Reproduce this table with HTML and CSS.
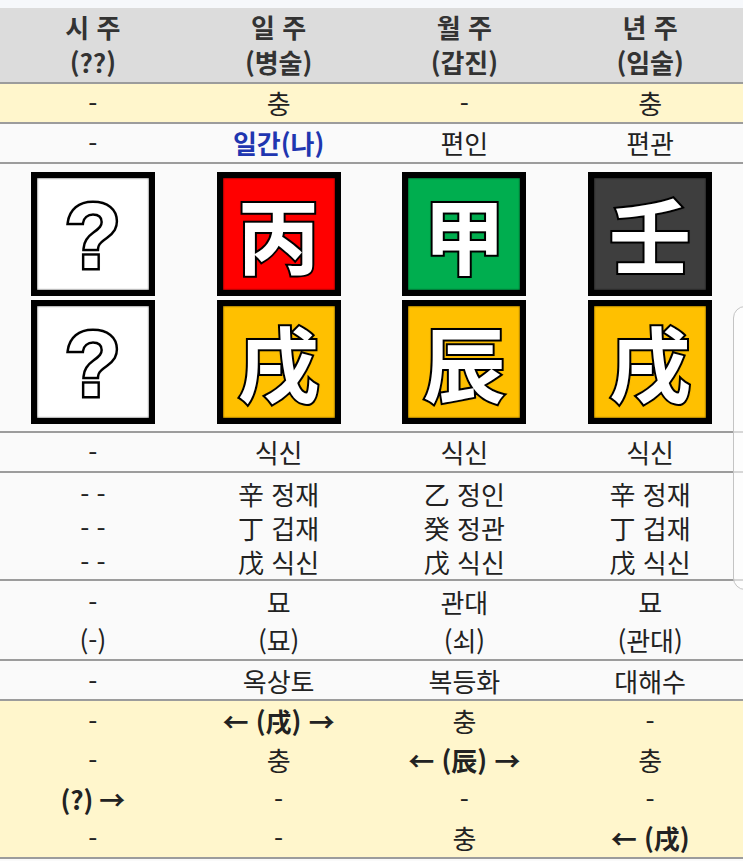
FILE: index.html
```html
<!DOCTYPE html>
<html lang="ko">
<head>
<meta charset="utf-8">
<title>사주 명식</title>
<link rel="stylesheet" href="styles.css">
</head>
<body>
<div class="page">
  <div class="topstrip"></div>
  <div class="table">
    <div class="row head">
      <div class="cell"><div>시 주</div><div>(??)</div></div>
      <div class="cell"><div>일 주</div><div>(병술)</div></div>
      <div class="cell"><div>월 주</div><div>(갑진)</div></div>
      <div class="cell"><div>년 주</div><div>(임술)</div></div>
    </div>
    <div class="row yellow single">
      <div class="cell">-</div>
      <div class="cell">충</div>
      <div class="cell">-</div>
      <div class="cell">충</div>
    </div>
    <div class="row single">
      <div class="cell">-</div>
      <div class="cell me">일간(나)</div>
      <div class="cell">편인</div>
      <div class="cell">편관</div>
    </div>
    <div class="row pillars">
      <div class="cell stack">
        <div class="box white"><span class="q">?</span></div>
        <div class="box white"><span class="q">?</span></div>
      </div>
      <div class="cell stack">
        <div class="box red"><span class="hz">丙</span></div>
        <div class="box earth"><span class="hz">戌</span></div>
      </div>
      <div class="cell stack">
        <div class="box green"><span class="hz">甲</span></div>
        <div class="box earth"><span class="hz">辰</span></div>
      </div>
      <div class="cell stack">
        <div class="box dark"><span class="hz">壬</span></div>
        <div class="box earth"><span class="hz">戌</span></div>
      </div>
    </div>
    <div class="row single">
      <div class="cell">-</div>
      <div class="cell">식신</div>
      <div class="cell">식신</div>
      <div class="cell">식신</div>
    </div>
    <div class="row stems">
      <div class="cell"><div>- -</div><div>- -</div><div>- -</div></div>
      <div class="cell"><div>辛 정재</div><div>丁 겁재</div><div>戊 식신</div></div>
      <div class="cell"><div>乙 정인</div><div>癸 정관</div><div>戊 식신</div></div>
      <div class="cell"><div>辛 정재</div><div>丁 겁재</div><div>戊 식신</div></div>
    </div>
    <div class="row stages">
      <div class="cell"><div>-</div><div>(-)</div></div>
      <div class="cell"><div>묘</div><div>(묘)</div></div>
      <div class="cell"><div>관대</div><div>(쇠)</div></div>
      <div class="cell"><div>묘</div><div>(관대)</div></div>
    </div>
    <div class="row single nabeum">
      <div class="cell">-</div>
      <div class="cell">옥상토</div>
      <div class="cell">복등화</div>
      <div class="cell">대해수</div>
    </div>
    <div class="row yellow rel">
      <div class="cell"><div>-</div><div>-</div><div class="b">(?) →</div><div>-</div></div>
      <div class="cell"><div class="b">← (戌) →</div><div>충</div><div>-</div><div>-</div></div>
      <div class="cell"><div>충</div><div class="b">← (辰) →</div><div>-</div><div>충</div></div>
      <div class="cell"><div>-</div><div>충</div><div>-</div><div class="b">← (戌)</div></div>
    </div>
  </div>
  <div class="scrollhandle"></div>
</div>
</body>
</html>
```
FILE: styles.css
```css
html, body {
  margin: 0;
  padding: 0;
  background: #fafafa;
}
body {
  font-family: "Noto Sans CJK KR", "Noto Sans", sans-serif;
  color: #222;
  overflow: hidden;
}
.page {
  position: relative;
  width: 743px;
  height: 861px;
  overflow: hidden;
}
.topstrip {
  height: 8px;
  background: #f6f8fb;
}
.table {
  display: flex;
  flex-direction: column;
}
.row {
  display: grid;
  grid-template-columns: repeat(4, 1fr);
  border-bottom: 2px solid #9c9c9c;
  background: #fafafa;
}
.cell {
  text-align: center;
  font-size: 26px;
  line-height: 38px;
  white-space: nowrap;
}
.head {
  background: #dcdcdc;
  height: 74px;
  color: #333;
  font-weight: 700;
}
.head .cell {
  font-size: 26px;
  line-height: 35px;
  padding-top: 1px;
}
.yellow {
  background: #fff6cc;
}
.single {
  height: 38px;
}
.me {
  color: #1f36b0;
  font-weight: 700;
}
.pillars {
  height: 267px;
}
.stack {
  display: flex;
  flex-direction: column;
  align-items: center;
  gap: 4px;
  padding-top: 8px;
}
.box {
  box-sizing: border-box;
  width: 124px;
  height: 124px;
  border: 6px solid #000;
  display: flex;
  align-items: center;
  justify-content: center;
  box-shadow: inset 0 0 2px #000;
}
.white { background: #ffffff; }
.red { background: #ff0000; }
.green { background: #00ae4f; }
.dark { background: #3e3e3e; }
.earth { background: #ffc000; }
.hz {
  font-family: "Noto Sans CJK SC", "Noto Sans CJK KR", sans-serif;
  font-weight: 700;
  font-size: 82px;
  line-height: 1;
  color: #fff;
  -webkit-text-stroke: 4px #000;
  paint-order: stroke fill;
  text-shadow: 0 0 3px rgba(0,0,0,0.7);
  margin-top: -2px;
}
.q {
  font-family: "Liberation Sans", "Arial", sans-serif;
  font-weight: 700;
  font-size: 92px;
  line-height: 1;
  color: #fff;
  -webkit-text-stroke: 5px #000;
  paint-order: stroke fill;
  text-shadow: 0 0 3px rgba(0,0,0,0.6);
  margin-top: 4px;
}
.stems {
  height: 106px;
}
.stems .cell {
  line-height: 34px;
  padding-top: 4px;
}
.stages {
  height: 78px;
}
.stages .cell {
  padding-top: 2px;
}
.nabeum .cell {
  padding-top: 1px;
}
.rel {
  height: 156px;
}
.rel .cell {
  line-height: 39px;
}
.b {
  font-weight: 700;
}
.scrollhandle {
  position: absolute;
  left: 733px;
  top: 306px;
  width: 30px;
  height: 284px;
  box-sizing: border-box;
  border: 1px solid #c4c4c4;
  border-radius: 12px;
  background: rgba(255,255,255,0.6);
}
```
